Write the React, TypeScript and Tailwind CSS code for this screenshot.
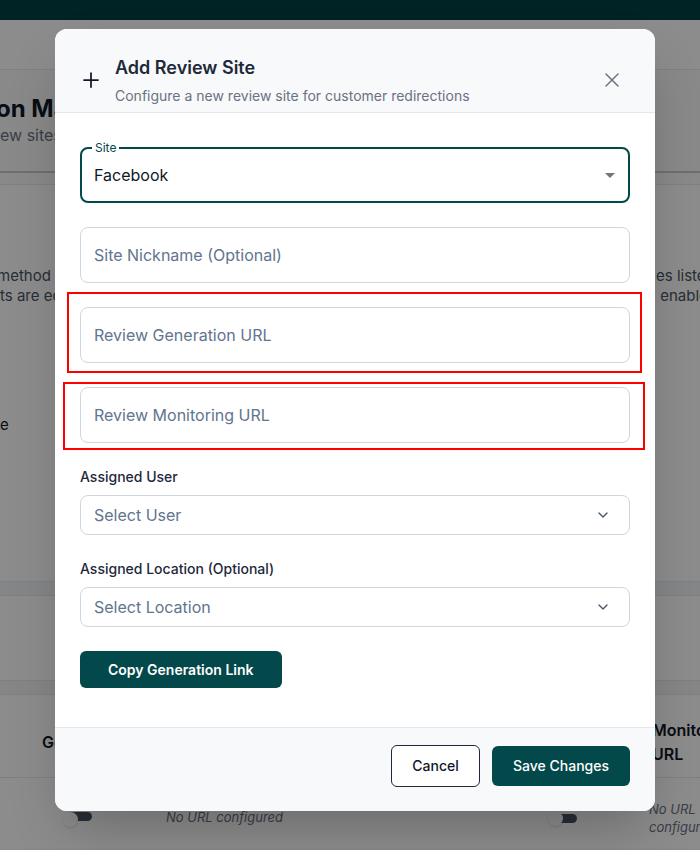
import React from "react";
import { ChevronDown, Plus, X } from "lucide-react";

function Toggle() {
  return (
    <div className="relative h-[15px] w-[29px] shrink-0">
      <div className="ml-[5px] mt-[3px] h-[9px] w-[24px] rounded-full bg-gray-600" />
      <div className="absolute left-0 top-0 h-[15px] w-[15px] rounded-full bg-white shadow" />
    </div>
  );
}

function TextField({ placeholder }: { placeholder: string }) {
  return (
    <input
      placeholder={placeholder}
      className="h-14 w-full rounded-lg border border-gray-300 bg-white px-[13px] text-base text-gray-900 outline-none placeholder:text-slate-500"
    />
  );
}

function SelectField({ label, placeholder }: { label: string; placeholder: string }) {
  return (
    <div>
      <div className="mb-2 text-sm font-medium leading-5 text-gray-800">{label}</div>
      <div className="flex h-10 items-center justify-between rounded-lg border border-gray-300 bg-white pl-[13px] pr-[18px]">
        <span className="text-base text-slate-500">{placeholder}</span>
        <ChevronDown size={16} strokeWidth={2} className="text-gray-600" />
      </div>
    </div>
  );
}

function BackgroundPage() {
  return (
    <div className="h-[850px] overflow-hidden bg-[#f9fafb]">
      <div className="h-5 bg-[#004045]" />
      <div className="h-[50px] border-b border-gray-200 bg-white" />
      <div className="h-[101px] whitespace-nowrap pt-[23px]">
        <div className="-ml-[4px] text-2xl font-bold leading-8 text-gray-900">on Management</div>
        <div className="text-base leading-5 text-gray-500">ew sites and settings</div>
      </div>
      <div className="h-[2px] bg-[#c9cbcf]" />
      <div className="h-[12px] border-b border-gray-200" />
      <div className="h-[396px] bg-white pt-[81px] text-[15px] leading-5 text-gray-600">
        <div className="flex justify-between">
          <div className="w-[55px] overflow-hidden whitespace-nowrap">
            <div className="-ml-[3px]">method of sending</div>
            <div>ts are equal</div>
          </div>
          <div className="w-[44px] overflow-hidden whitespace-nowrap">
            <div>es listed</div>
            <div>&nbsp;enabled</div>
          </div>
        </div>
        <div className="mt-[109px] text-gray-900">e</div>
      </div>
      <div className="h-[15px] border-y border-gray-200 bg-[#f3f4f6]" />
      <div className="h-[84px] bg-white" />
      <div className="h-[15px] border-y border-gray-200 bg-[#f3f4f6]" />
      <div className="flex h-[83px] items-center justify-between border-b border-gray-200 bg-white pt-[12px] text-base font-semibold text-gray-900">
        <div className="w-[55px] overflow-hidden whitespace-nowrap pl-[42px]">Generation URL</div>
        <div className="w-[48px] overflow-hidden whitespace-nowrap leading-6">
          <div>Monitoring</div>
          <div>URL</div>
        </div>
      </div>
      <div className="flex h-[70px] items-center bg-white pt-[10px]">
        <div className="ml-[63px]">
          <Toggle />
        </div>
        <div className="w-[456px] shrink-0 pl-[74px] text-[13px] italic text-gray-500">No URL configured</div>
        <Toggle />
        <div className="ml-[72px] w-[51px] shrink-0 text-[13px] italic leading-[18px] text-gray-500">No URL configured</div>
      </div>
    </div>
  );
}

export default function App() {
  return (
    <div className="relative h-[850px] overflow-hidden font-['Inter',sans-serif]">
      <BackgroundPage />

      <div className="absolute inset-0 flex items-start justify-center bg-black/45 pl-[10px] pt-[29px]">
        <div className="w-[600px] overflow-hidden rounded-xl bg-white shadow-2xl">
          {/* header */}
          <div className="flex h-[84px] items-start border-b border-gray-200 bg-[#f8f9fb] pl-6 pr-[31px] pt-[25px]">
            <div className="flex flex-1 items-center gap-3">
              <Plus size={24} strokeWidth={1.75} className="text-gray-900" />
              <div>
                <h2 className="text-lg font-semibold leading-7 text-gray-800">Add Review Site</h2>
                <p className="mt-1 text-sm leading-5 text-gray-500">
                  Configure a new review site for customer redirections
                </p>
              </div>
            </div>
            <button className="mt-[14px] text-gray-500">
              <X size={24} strokeWidth={1.5} />
            </button>
          </div>

          {/* body */}
          <div className="flex flex-col gap-6 px-[25px] pb-[39px] pt-[34px]">
            <div className="relative flex h-14 items-center justify-between rounded-lg border-2 border-[#03484a] pl-3 pr-[6px]">
              <span className="absolute -top-[9px] left-[10px] bg-white px-[3px] text-xs leading-4 text-[#03484a]">
                Site
              </span>
              <span className="text-base text-gray-900">Facebook</span>
              <svg width="24" height="24" viewBox="0 0 24 24" className="fill-[#757575]">
                <path d="M7 10l5 5 5-5z" />
              </svg>
            </div>

            <TextField placeholder="Site Nickname (Optional)" />

            <div className="relative">
              <div className="pointer-events-none absolute -bottom-[10px] -left-[13px] -right-[12px] -top-[15px] border-2 border-[#ff0000]" />
              <TextField placeholder="Review Generation URL" />
            </div>

            <div className="relative">
              <div className="pointer-events-none absolute -bottom-[7px] -left-[17px] -right-[15px] -top-[5px] border-2 border-[#ff0000]" />
              <TextField placeholder="Review Monitoring URL" />
            </div>

            <SelectField label="Assigned User" placeholder="Select User" />
            <SelectField label="Assigned Location (Optional)" placeholder="Select Location" />

            <div>
              <button className="h-[37px] rounded-md bg-[#03484a] px-[28px] text-sm font-semibold text-white">
                Copy Generation Link
              </button>
            </div>
          </div>

          {/* footer */}
          <div className="flex h-[84px] items-start justify-end border-t border-gray-200 bg-[#f8f9fb] pr-[25px] pt-[17px]">
            <div className="flex items-center gap-3">
              <button className="h-[42px] w-[89px] rounded-md border border-gray-800 bg-white text-sm font-medium text-gray-900">
                Cancel
              </button>
              <button className="h-10 w-[138px] rounded-md bg-[#03484a] text-sm font-medium text-white">
                Save Changes
              </button>
            </div>
          </div>
        </div>
      </div>
    </div>
  );
}
